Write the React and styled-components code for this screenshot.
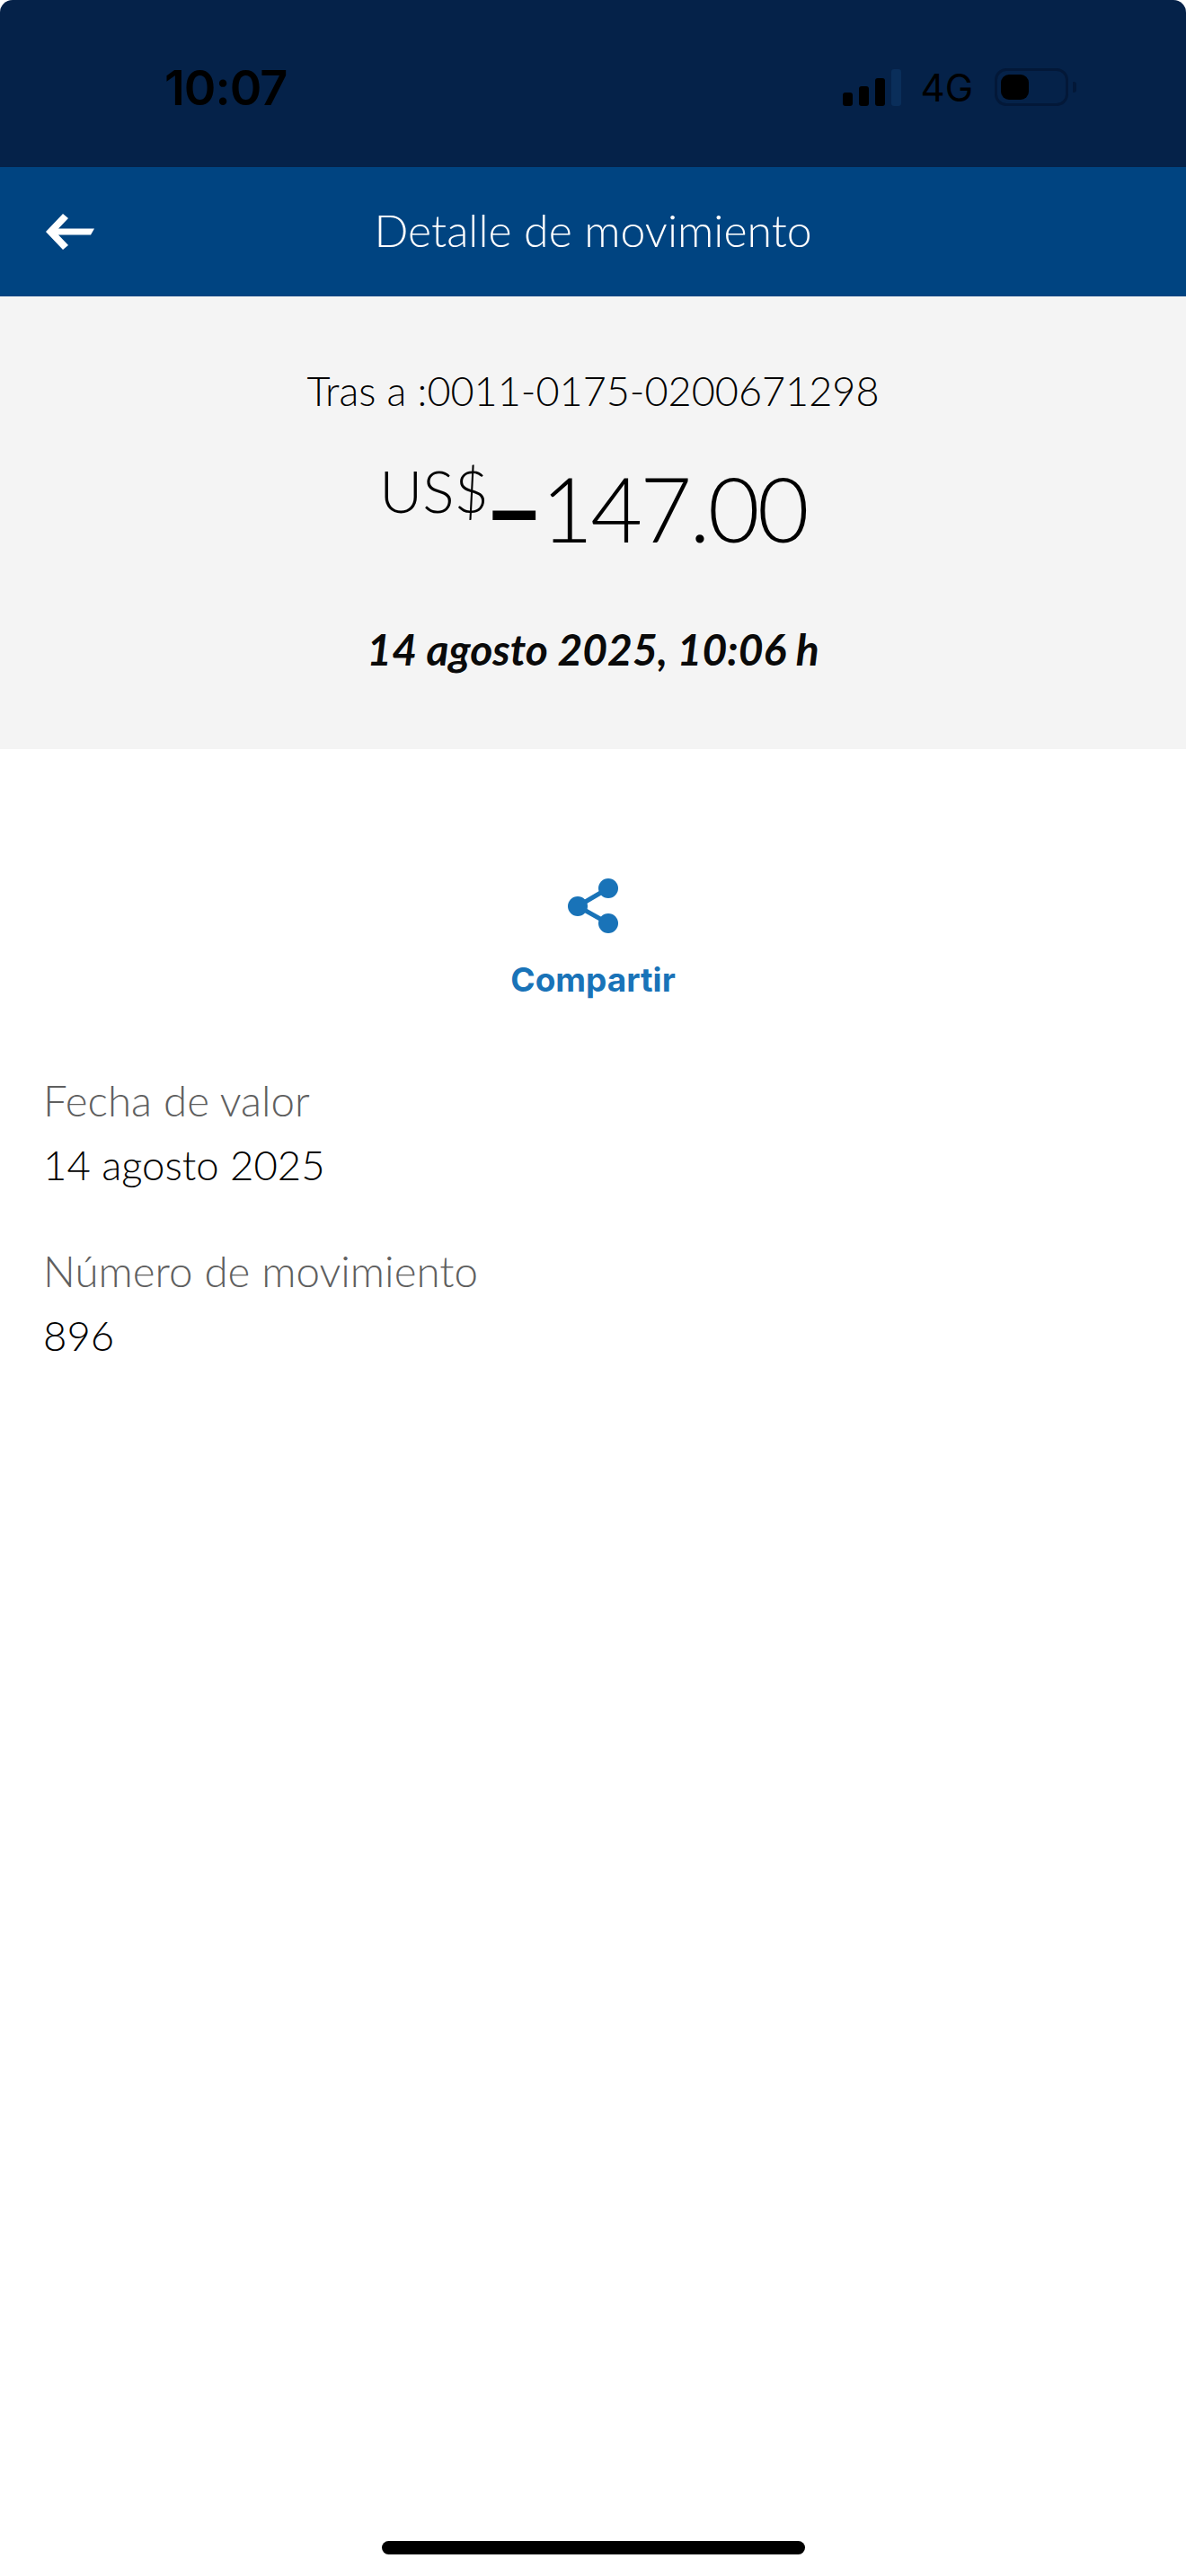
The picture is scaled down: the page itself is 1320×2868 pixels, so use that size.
import React from "react";
import styled, { createGlobalStyle } from "styled-components";

const GlobalStyle = createGlobalStyle`
  html, body {
    margin: 0;
    padding: 0;
    background: #ffffff;
  }
  body {
    font-family: "Lato", "Open Sans", sans-serif;
  }
`;

const App = () => {
  return (
    <Page>
      <GlobalStyle />
      <StatusBar>
        <Clock>10:07</Clock>
        <StatusIcons>
          <SignalBars>
            <SignalBar h={15} />
            <SignalBar h={22} />
            <SignalBar h={31} />
            <SignalBar h={41} off />
          </SignalBars>
          <Network>4G</Network>
          <Battery>
            <BatteryLevel />
          </Battery>
          <BatteryNub />
        </StatusIcons>
      </StatusBar>

      <Header>
        <BackButton>
          <svg width="54" height="40" viewBox="0 0 54 40">
            <path d="M0 20 L19 0 L25 5 L14 16.500 L54 16.500 L50 23.500 L14 23.500 L25 35 L19 40 Z" fill="#ffffff" />
          </svg>
        </BackButton>
        <Title>Detalle de movimiento</Title>
      </Header>

      <Summary>
        <Concept>Tras a :0011-0175-0200671298</Concept>
        <Amount>
          <Currency>US$</Currency>
          <Minus>–</Minus>
          <Value>147.00</Value>
        </Amount>
        <DateTime>14 agosto 2025, 10:06 h</DateTime>
      </Summary>

      <ShareButton>
        <svg width="58" height="62" viewBox="0 0 58 62">
          <path d="M12 31 L46 11 M12 31 L46 50" stroke="#1973b8" strokeWidth="5" fill="none" />
          <circle cx="46" cy="11" r="11" fill="#1973b8" />
          <circle cx="12" cy="31" r="11" fill="#1973b8" />
          <circle cx="46" cy="50" r="11" fill="#1973b8" />
        </svg>
        <ShareLabel>Compartir</ShareLabel>
      </ShareButton>

      <Details>
        <Detail>
          <DetailLabel>Fecha de valor</DetailLabel>
          <DetailValue>14 agosto 2025</DetailValue>
        </Detail>
        <Detail>
          <DetailLabel>Número de movimiento</DetailLabel>
          <DetailValue>896</DetailValue>
        </Detail>
      </Details>

      <HomeIndicator />
    </Page>
  );
};

export default App;

const Page = styled.div`
  width: 1320px;
  height: 2868px;
  display: flex;
  flex-direction: column;
  overflow: hidden;
  background: #ffffff;
`;

const StatusBar = styled.div`
  height: 186px;
  flex-shrink: 0;
  box-sizing: border-box;
  padding: 0 122px 0 183px;
  display: flex;
  align-items: center;
  justify-content: space-between;
  background: #052249;
  border-radius: 14px 14px 0 0;
`;

const Clock = styled.div`
  font-family: "Inter", sans-serif;
  font-weight: 600;
  font-size: 54px;
  letter-spacing: -1px;
  color: #000000;
  margin-top: 8px;
`;

const StatusIcons = styled.div`
  display: flex;
  align-items: center;
  margin-top: 8px;
`;

const SignalBars = styled.div`
  display: flex;
  align-items: flex-end;
  gap: 7px;
  height: 41px;
  margin-right: 22px;
`;

const SignalBar = styled.div`
  width: 11px;
  height: ${({ h }) => h}px;
  border-radius: 3px;
  background: ${({ off }) => (off ? "#0a2e5a" : "#000000")};
`;

const Network = styled.div`
  font-family: "Inter", sans-serif;
  font-weight: 400;
  font-size: 42px;
  color: #000000;
  margin-right: 24px;
`;

const Battery = styled.div`
  width: 82px;
  height: 42px;
  box-sizing: border-box;
  padding: 4px;
  border: 3px solid #031838;
  border-radius: 13px;
`;

const BatteryLevel = styled.div`
  width: 31px;
  height: 100%;
  border-radius: 9px;
  background: #000000;
`;

const BatteryNub = styled.div`
  width: 4px;
  height: 12px;
  margin-left: 5px;
  border-radius: 0 3px 3px 0;
  background: #031838;
`;

const Header = styled.div`
  height: 144px;
  flex-shrink: 0;
  display: grid;
  grid-template-columns: 1fr auto 1fr;
  align-items: center;
  background: #004481;
`;

const BackButton = styled.div`
  padding-left: 51px;
  display: flex;
  align-items: center;
`;

const Title = styled.div`
  font-weight: 300;
  font-size: 50px;
  margin-bottom: 4px;
  color: #ffffff;
`;

const Summary = styled.div`
  height: 504px;
  flex-shrink: 0;
  box-sizing: border-box;
  padding-top: 76px;
  display: flex;
  flex-direction: column;
  align-items: center;
  background: #f4f4f4;
`;

const Concept = styled.div`
  font-weight: 300;
  font-size: 45px;
  line-height: 58px;
  color: #000000;
`;

const Amount = styled.div`
  margin-top: 36px;
  height: 120px;
  display: flex;
  align-items: baseline;
  color: #000000;
  font-weight: 300;
`;

const Currency = styled.span`
  font-size: 66px;
  position: relative;
  top: -33px;
`;

const Minus = styled.span`
  font-size: 118px;
  font-weight: 700;
  line-height: 1;
  position: relative;
  top: 5px;
  margin: 0 -4px 0 -6px;
`;

const Value = styled.span`
  font-size: 100px;
  letter-spacing: -3px;
`;

const DateTime = styled.div`
  margin-top: 74px;
  font-weight: 700;
  font-style: italic;
  font-size: 48px;
  line-height: 58px;
  color: #0a0a0a;
`;

const ShareButton = styled.div`
  margin-top: 144px;
  display: flex;
  flex-direction: column;
  align-items: center;
  gap: 30px;
`;

const ShareLabel = styled.div`
  font-family: "Inter", sans-serif;
  font-weight: 700;
  font-size: 37px;
  line-height: 42px;
  color: #1973b8;
`;

const Details = styled.div`
  margin-top: 84px;
  padding-left: 48px;
  display: flex;
  flex-direction: column;
  gap: 60px;
`;

const Detail = styled.div`
  display: flex;
  flex-direction: column;
  gap: 14px;
`;

const DetailLabel = styled.div`
  font-weight: 300;
  font-size: 47.500px;
  line-height: 58px;
  color: #5f5f5f;
`;

const DetailValue = styled.div`
  font-weight: 300;
  font-size: 45.500px;
  line-height: 58px;
  color: #000000;
`;

const HomeIndicator = styled.div`
  width: 471px;
  height: 15px;
  margin: auto auto 24px;
  border-radius: 8px;
  background: #000000;
`;
